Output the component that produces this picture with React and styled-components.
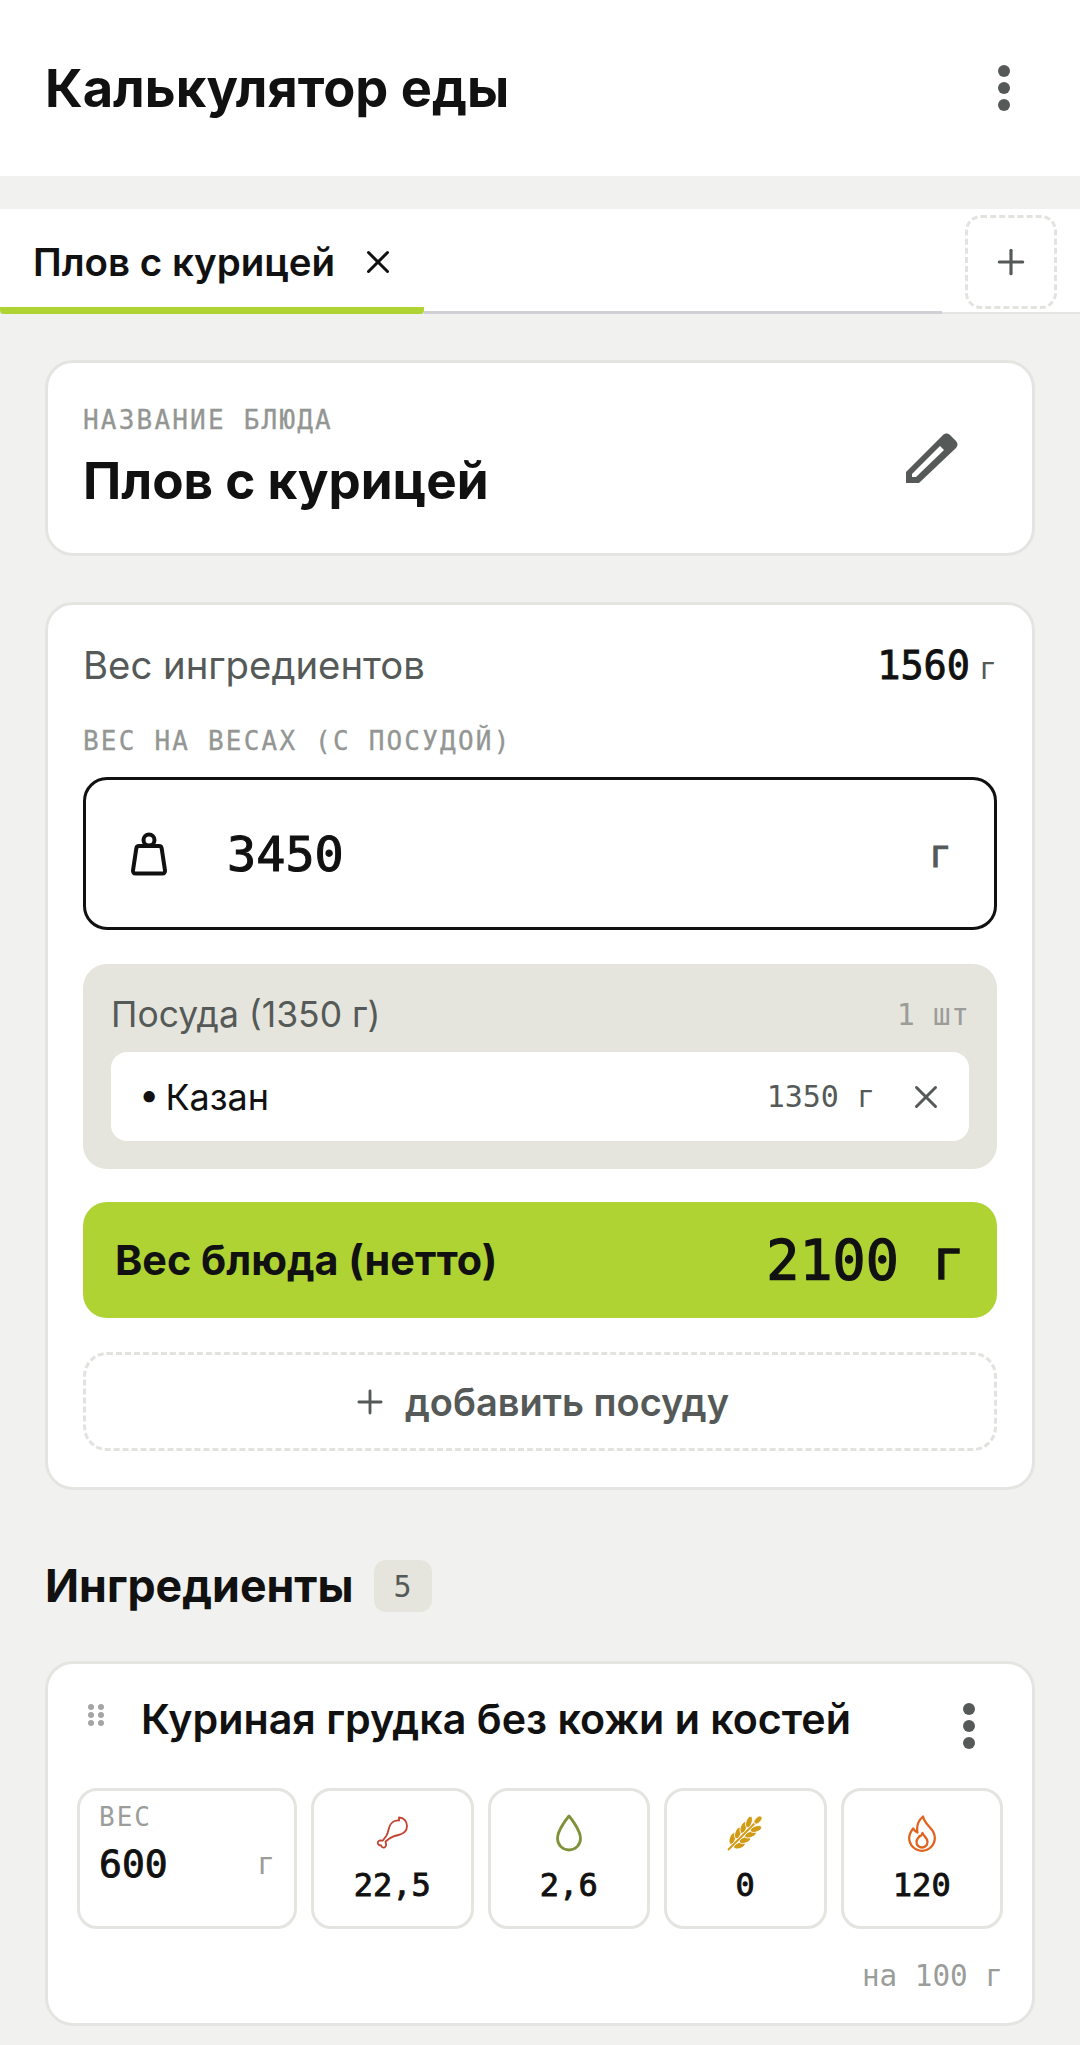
import React from "react";
import styled, { createGlobalStyle } from "styled-components";
import { X, Plus } from "lucide-react";

const GlobalStyle = createGlobalStyle`
  html, body {
    margin: 0;
    background: #f1f1ef;
    font-family: Inter, "Noto Sans", sans-serif;
    color: #111;
    height: 2045px;
    overflow: hidden;
  }
  * { box-sizing: border-box; }
`;

const mono = `"DejaVu Sans Mono", "Liberation Mono", monospace`;

const Dots = ({ size }) => (
  <DotColumn>
    <Dot $size={size} />
    <Dot $size={size} />
    <Dot $size={size} />
  </DotColumn>
);

const PencilIcon = () => (
  <svg width="54" height="54" viewBox="0 0 54 54" fill="none">
    <path d="M1 53V42L38 5c2-2 5-2 7 0l6 6c2 2 2 5 0 7L14 53z" fill="#555a58" />
    <path d="M7 47v-3L35 16l4 4L11 47z" fill="#fff" />
  </svg>
);

const ScaleIcon = () => (
  <svg width="38" height="44" viewBox="0 0 38 44" fill="none" stroke="#111" strokeWidth="4" strokeLinejoin="round">
    <circle cx="19" cy="8" r="5.5" />
    <path d="M9 14h20c1.500 0 2.500 1 2.700 2.500l3.300 22c.2 1.800-.8 3-2.500 3H5.500c-1.700 0-2.700-1.200-2.500-3l3.300-22C6.500 15 7.500 14 9 14z" />
  </svg>
);

const Grip = () => (
  <svg width="16" height="24" viewBox="0 0 16 24" fill="#a3a6a3">
    <circle cx="3" cy="4" r="3" />
    <circle cx="13" cy="4" r="3" />
    <circle cx="3" cy="12" r="3" />
    <circle cx="13" cy="12" r="3" />
    <circle cx="3" cy="20" r="3" />
    <circle cx="13" cy="20" r="3" />
  </svg>
);

const DrumstickIcon = () => (
  <svg width="34" height="34" viewBox="0 0 34 34" fill="none" stroke="#c0422f" strokeWidth="1.800" strokeLinejoin="round">
    <path d="M24 1.500c4.500 0 8 3.700 8 8.500 0 5-4 8-8.500 9-3.500.8-6.500 1.500-9 3.500l-4 3 .6 3c.3 2-1.400 3.500-3.200 3-1-.3-1.500-1-1.800-2-1.200 0-2.300-.4-3-1.500-.8-1.500 0-3 1.500-3.500l3 .2 3.500-4.500c1.700-2.300 2-5 3-8.500 1.200-4.500 5-7.700 10-7.200z" />
  </svg>
);

const DropIcon = () => (
  <svg width="28" height="38" viewBox="0 0 28 38" fill="none" stroke="#7f9239" strokeWidth="2.800" strokeLinejoin="round">
    <path d="M14 2c0 0 11.500 13.500 11.500 22.500a11.500 11.500 0 0 1-23 0C2.500 15.500 14 2 14 2z" />
  </svg>
);

const grains = [0, 1, 2, 3];

const WheatIcon = () => (
  <svg width="36" height="36" viewBox="0 0 36 36" fill="#d19b16">
    <path d="M1 35L31 5" stroke="#d19b16" strokeWidth="2" />
    {grains.map((i) => {
      const cx = 9 + i * 5.500;
      const cy = 27 - i * 5.500;
      return (
        <g key={i} stroke="#fff" strokeWidth="0.800">
          <ellipse cx={cx - 3.500} cy={cy - 3.500} rx="6" ry="3" transform={`rotate(-70 ${cx - 3.500} ${cy - 3.500})`} />
          <ellipse cx={cx + 3.500} cy={cy + 3.500} rx="6" ry="3" transform={`rotate(-20 ${cx + 3.500} ${cy + 3.500})`} />
        </g>
      );
    })}
    <ellipse cx="31" cy="5" rx="5" ry="2.800" transform="rotate(-45 31 5)" stroke="#fff" strokeWidth="0.800" />
  </svg>
);

const FireIcon = () => (
  <svg width="28" height="37" viewBox="0 0 28 37" fill="none" stroke="#e0641f" strokeWidth="2.300" strokeLinejoin="round">
    <path d="M15 1.500c1 5 4 7.500 7 11 3 3.200 4.800 6.500 4.800 10.500a12.800 12.800 0 0 1-25.600 0c0-4 2-7 4-9.500 1 1.800 2.200 3 4.200 4-1-6 1-12 5.600-16z" />
    <path d="M14.500 18c1 3.300 5 4.500 5 9a5.500 5.500 0 0 1-11 0c0-3 2-4 3-6 1 1 2.200-1 3-3z" />
  </svg>
);

const stats = [
  { value: "22,5", icon: <DrumstickIcon /> },
  { value: "2,6", icon: <DropIcon /> },
  { value: "0", icon: <WheatIcon /> },
  { value: "120", icon: <FireIcon /> },
];

const App = () => {
  return (
    <>
      <GlobalStyle />
      <Header>
        <AppTitle>Калькулятор еды</AppTitle>
        <Dots size={12} />
      </Header>
      <TabBar>
        <Tab>
          <TabName>Плов с курицей</TabName>
          <X size={38} strokeWidth={1.9} />
        </Tab>
        <TabRest />
        <AddTab>
          <Plus size={40} color="#555a58" strokeWidth={1.9} />
        </AddTab>
      </TabBar>
      <Content>
        <NameCard>
          <div>
            <Label>НАЗВАНИЕ БЛЮДА</Label>
            <DishName>Плов с курицей</DishName>
          </div>
          <PencilIcon />
        </NameCard>
        <WeightCard>
          <TotalRow>
            <TotalLabel>Вес ингредиентов</TotalLabel>
            <TotalValue>
              1560<small>г</small>
            </TotalValue>
          </TotalRow>
          <ScaleLabel>ВЕС НА ВЕСАХ (С ПОСУДОЙ)</ScaleLabel>
          <ScaleInput>
            <ScaleIcon />
            <ScaleValue>3450</ScaleValue>
            <ScaleUnit>г</ScaleUnit>
          </ScaleInput>
          <DishPanel>
            <DishHead>
              <DishTitle>Посуда (1350 г)</DishTitle>
              <DishCount>1 шт</DishCount>
            </DishHead>
            <DishItem>
              <DishItemName>• Казан</DishItemName>
              <DishItemWeight>1350 г</DishItemWeight>
              <X size={38} color="#555a58" strokeWidth={1.9} />
            </DishItem>
          </DishPanel>
          <NetBar>
            <NetLabel>Вес блюда (нетто)</NetLabel>
            <NetValue>2100 г</NetValue>
          </NetBar>
          <AddDish>
            <Plus size={38} strokeWidth={1.8} />
            добавить посуду
          </AddDish>
        </WeightCard>
        <SectionHead>
          <SectionTitle>Ингредиенты</SectionTitle>
          <Badge>5</Badge>
        </SectionHead>
        <IngredientCard>
          <IngredientHead>
            <Grip />
            <IngredientName>Куриная грудка без кожи и костей</IngredientName>
            <Dots size={12} />
          </IngredientHead>
          <StatRow>
            <WeightBox>
              <WeightLabel>ВЕС</WeightLabel>
              <WeightLine>
                <span>600</span>
                <small>г</small>
              </WeightLine>
            </WeightBox>
            {stats.map((s) => (
              <StatBox key={s.value}>
                <StatIcon>{s.icon}</StatIcon>
                <StatValue>{s.value}</StatValue>
              </StatBox>
            ))}
          </StatRow>
          <Per100>на 100 г</Per100>
        </IngredientCard>
      </Content>
    </>
  );
};

export default App;

const Header = styled.header`
  height: 176px;
  background: #fff;
  display: flex;
  align-items: center;
  justify-content: space-between;
  padding: 0 70px 0 45px;
`;

const AppTitle = styled.h1`
  margin: 0;
  font-size: 52.400px;
  font-weight: 700;
`;

const DotColumn = styled.div`
  display: flex;
  flex-direction: column;
  gap: 5px;
  flex: none;
`;

const Dot = styled.span`
  width: ${(p) => p.$size}px;
  height: ${(p) => p.$size}px;
  border-radius: 50%;
  background: #555a58;
`;

const TabBar = styled.div`
  margin-top: 33px;
  height: 105px;
  background: #fff;
  display: flex;
  align-items: flex-end;
  border-bottom: 2px solid #e4e4e0;
  position: relative;
`;

const Tab = styled.div`
  width: 424px;
  height: 105px;
  padding: 8px 0 0 33px;
  display: flex;
  align-items: center;
  gap: 24px;
  border-bottom: 7px solid #aed333;
  border-radius: 0 0 4px 4px;
  margin-bottom: -2px;
`;

const TabName = styled.span`
  font-size: 38.500px;
  font-weight: 600;
`;

const TabRest = styled.div`
  width: 518px;
  height: 3px;
  background: #cfcfd6;
  margin-bottom: -2px;
`;

const AddTab = styled.div`
  position: absolute;
  top: 6px;
  left: 965px;
  width: 92px;
  height: 94px;
  border: 3px dashed #e2e2de;
  border-radius: 16px;
  display: flex;
  align-items: center;
  justify-content: center;
`;

const Content = styled.main`
  padding: 46px 45px 0;
`;

const Card = styled.section`
  background: #fff;
  border: 3px solid #e4e4e0;
  border-radius: 28px;
`;

const NameCard = styled(Card)`
  height: 196px;
  padding: 0 73px 2px 35px;
  display: flex;
  align-items: center;
  justify-content: space-between;
`;

const MonoText = styled.span`
  font-family: ${mono};
  -webkit-text-stroke: 0.9px currentColor;
`;

const Label = styled.div`
  font-family: ${mono};
  font-size: 26px;
  line-height: 32px;
  color: #939693;
  letter-spacing: 2.200px;
  -webkit-text-stroke: 0.3px currentColor;
`;

const DishName = styled.div`
  margin-top: 14px;
  font-size: 51.200px;
  font-weight: 700;
  line-height: 60px;
`;

const WeightCard = styled(Card)`
  margin-top: 46px;
  height: 888px;
  padding: 36px 35px 0;
`;

const TotalRow = styled.div`
  display: flex;
  justify-content: space-between;
  align-items: center;
  height: 48px;
`;

const TotalLabel = styled.span`
  font-size: 38.300px;
  color: #555a58;
`;

const TotalValue = styled(MonoText)`
  font-size: 38.500px;
  small {
    margin-left: 9px;
    font-size: 30px;
    -webkit-text-stroke: 0;
    color: #555a58;
  }
`;

const ScaleLabel = styled(Label)`
  margin-top: 36px;
`;

const ScaleInput = styled.div`
  margin-top: 20px;
  height: 153px;
  border: 3px solid #111;
  border-radius: 24px;
  display: flex;
  align-items: center;
  padding: 0 42px 0 44px;
`;

const ScaleValue = styled(MonoText)`
  margin-left: 59px;
  flex: 1;
  font-size: 48.500px;
  -webkit-text-stroke: 1.1px currentColor;
`;

const ScaleUnit = styled(MonoText)`
  font-size: 38px;
  color: #555a58;
`;

const DishPanel = styled.div`
  margin-top: 34px;
  height: 205px;
  background: #e6e5dd;
  border-radius: 24px;
  padding: 26px 28px 0;
`;

const DishHead = styled.div`
  display: flex;
  justify-content: space-between;
  align-items: center;
  height: 48px;
`;

const DishTitle = styled.span`
  font-size: 35.500px;
  color: #555a58;
`;

const DishCount = styled.span`
  font-family: ${mono};
  font-size: 30px;
  color: #9a9d9a;
`;

const DishItem = styled.div`
  margin-top: 14px;
  height: 89px;
  background: #fff;
  border-radius: 16px;
  display: flex;
  align-items: center;
  padding: 0 24px 0 28px;
`;

const DishItemName = styled.span`
  flex: 1;
  font-size: 36px;
  word-spacing: -4px;
`;

const DishItemWeight = styled.span`
  margin-right: 32px;
  font-family: ${mono};
  font-size: 30px;
  color: #555a58;
`;

const NetBar = styled.div`
  margin-top: 33px;
  height: 116px;
  background: #aed333;
  border-radius: 24px;
  display: flex;
  align-items: center;
  justify-content: space-between;
  padding: 0 32px;
`;

const NetLabel = styled.span`
  font-size: 41.300px;
  font-weight: 700;
`;

const NetValue = styled(MonoText)`
  font-size: 55px;
  -webkit-text-stroke: 1.3px currentColor;
`;

const AddDish = styled.div`
  margin-top: 34px;
  height: 99px;
  border: 3px dashed #e2e2de;
  border-radius: 24px;
  display: flex;
  align-items: center;
  justify-content: center;
  gap: 16px;
  font-size: 38px;
  font-weight: 600;
  color: #555a58;
`;

const SectionHead = styled.div`
  margin-top: 69px;
  height: 54px;
  display: flex;
  align-items: center;
  gap: 20px;
`;

const SectionTitle = styled.h2`
  margin: 0;
  font-size: 44.700px;
  font-weight: 700;
`;

const Badge = styled.span`
  width: 58px;
  height: 52px;
  border-radius: 12px;
  background: #e6e5dd;
  display: flex;
  align-items: center;
  justify-content: center;
  font-family: ${mono};
  font-size: 30px;
  color: #555a58;
`;

const IngredientCard = styled(Card)`
  margin-top: 48px;
  height: 365px;
  padding: 30px 29px 0;
`;

const IngredientHead = styled.div`
  display: flex;
  align-items: flex-start;
  height: 94px;
  padding: 0 28px 0 11px;
  > svg {
    margin-top: 9px;
  }
  > div {
    margin-top: 9px;
  }
`;

const IngredientName = styled.span`
  flex: 1;
  margin-left: 37px;
  font-size: 41.200px;
  font-weight: 600;
  line-height: 50px;
`;

const StatRow = styled.div`
  display: grid;
  grid-template-columns: 220px repeat(4, 1fr);
  gap: 14px;
  height: 141px;
`;

const BoxBase = styled.div`
  border: 3px solid #e4e4e0;
  border-radius: 20px;
`;

const WeightBox = styled(BoxBase)`
  padding: 10px 19px 0;
`;

const WeightLabel = styled.div`
  font-family: ${mono};
  font-size: 26px;
  line-height: 32px;
  letter-spacing: 2px;
  color: #9a9d9a;
`;

const WeightLine = styled(MonoText)`
  display: flex;
  justify-content: space-between;
  align-items: center;
  margin-top: 7px;
  font-size: 38px;
  line-height: 48px;
  small {
    font-size: 30px;
    -webkit-text-stroke: 0;
    color: #9a9d9a;
  }
`;

const StatBox = styled(BoxBase)`
  display: flex;
  flex-direction: column;
  align-items: center;
  padding-top: 20px;
`;

const StatIcon = styled.div`
  height: 44px;
  display: flex;
  align-items: center;
`;

const StatValue = styled(MonoText)`
  margin-top: 8px;
  font-size: 32px;
  line-height: 44px;
`;

const Per100 = styled.div`
  margin-top: 30px;
  text-align: right;
  font-family: ${mono};
  font-size: 29.300px;
  color: #9a9d9a;
`;
